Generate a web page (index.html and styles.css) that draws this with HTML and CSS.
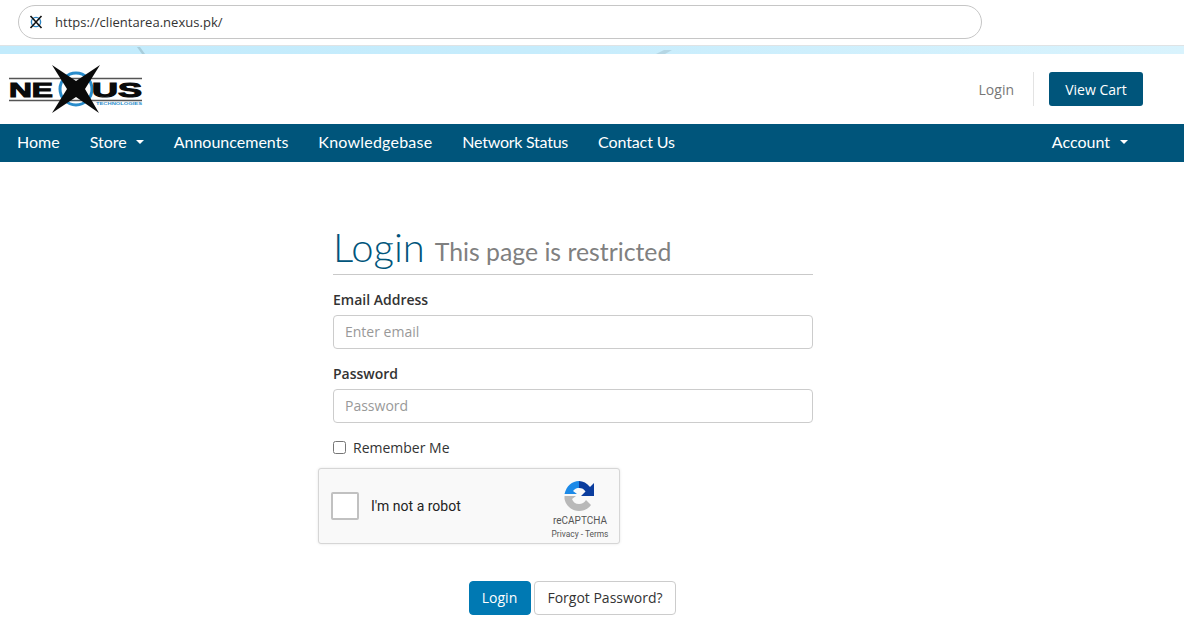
FILE: index.html
```html
<!DOCTYPE html>
<html lang="en">
<head>
<meta charset="utf-8">
<title>Login - Nexus</title>
<link rel="stylesheet" href="styles.css">
</head>
<body>
<div class="browser">
  <div class="address">
    <svg class="favicon" width="14" height="14" viewBox="0 0 14 14"><circle cx="7" cy="7" r="4.600" fill="none" stroke="#2d86c4" stroke-width="1.400"/><path d="M1.500 1 12.500 13M12.500 1 1.500 13" stroke="#111" stroke-width="1.600"/></svg>
    <span class="url">https://clientarea.nexus.pk/</span>
  </div>
</div>
<div class="band">
  <svg class="band-art" width="1184" height="8" viewBox="0 0 1184 8"><path d="M137 1l5 7h3l-5-7z" fill="#a8cddb"/><path d="M656 8l8-4 8 0-7 4z" fill="#b5d6e4"/></svg>
</div>
<header class="top">
  <svg class="logo" width="136" height="52" viewBox="0 0 136 52">
    <path d="M1 14.500H134M1 36.500H134" stroke="#555" stroke-width="1.600"/>
    <circle cx="68" cy="25" r="16" fill="none" stroke="#2a8ccb" stroke-width="3"/>
    <text class="logo-word" x="1" y="33" textLength="44" lengthAdjust="spacingAndGlyphs">NE</text>
    <text class="logo-word" x="84" y="33" textLength="50" lengthAdjust="spacingAndGlyphs">US</text>
    <path d="M44 1 68 17 92 1 77 25 91 49 68 33 44 49 59 25Z" fill="#0a0a0a"/>
    <text class="logo-tag" x="88" y="41" textLength="46" lengthAdjust="spacingAndGlyphs">TECHNOLOGIES</text>
  </svg>
  <div class="top-actions">
    <a class="top-login">Login</a>
    <span class="top-sep"></span>
    <a class="cart">View Cart</a>
  </div>
</header>
<nav class="nav">
  <div class="nav-left">
    <a>Home</a>
    <a>Store<i class="caret"></i></a>
    <a>Announcements</a>
    <a class="wide">Knowledgebase</a>
    <a class="tight">Network Status</a>
    <a class="snug">Contact Us</a>
  </div>
  <div class="nav-right"><a>Account<i class="caret caret-wide"></i></a></div>
</nav>
<main class="main">
  <form class="login">
    <h1 class="title">Login <small>This page is restricted</small></h1>
    <div class="field">
      <label class="label" for="email">Email Address</label>
      <input class="input" id="email" type="text" placeholder="Enter email">
    </div>
    <div class="field">
      <label class="label" for="pw">Password</label>
      <input class="input" id="pw" type="text" placeholder="Password">
    </div>
    <label class="remember"><input class="check" type="checkbox">Remember Me</label>
    <div class="captcha">
      <span class="captcha-box"></span>
      <span class="captcha-text">I'm not a robot</span>
      <div class="captcha-brand">
        <svg class="captcha-logo" width="32" height="32" viewBox="0 0 32 32">
          <path d="M16 1C9 1 3.500 6 1.500 14L14 14 10 11C12 8.500 14 8 16 8Z" fill="#1c8ae8"/>
          <path d="M16 1C20 1 24 3 27 7L31 3 31 16 18 16 22.500 11.500C21 9 19 8 16 8Z" fill="#0b3d9e"/>
          <path d="M1.500 16 1.500 19C3 26 9 31 16 31 21 31 25 29 28 25L23 20C21.500 22.500 19 24 16 24 12.500 24 10 22 9 19L13 16Z" fill="#b9b9b9"/>
        </svg>
        <span class="captcha-name">reCAPTCHA</span>
        <span class="captcha-links">Privacy - Terms</span>
      </div>
    </div>
    <div class="actions">
      <button class="btn btn-primary" type="button">Login</button>
      <button class="btn btn-default" type="button">Forgot Password?</button>
    </div>
  </form>
</main>
</body>
</html>
```
FILE: styles.css
```css
* { box-sizing: border-box; }
html, body { margin: 0; padding: 0; }
body {
  width: 1184px;
  height: 638px;
  overflow: hidden;
  background: #fff;
  font-family: "Open Sans", sans-serif;
  color: #333;
}
.browser {
  height: 46px;
  padding: 5px 0 0 18px;
  border-bottom: 1px solid #dfe3e5;
}
.address {
  width: 964px;
  height: 34px;
  display: flex;
  align-items: center;
  padding-left: 10px;
  border: 1px solid #c6c6c6;
  border-radius: 17px;
  background: #fff;
}
.url {
  margin-left: 12px;
  font-size: 13px;
  letter-spacing: .03px;
  color: #333;
}
.favicon { flex: none; }
.band {
  height: 8px;
  background: linear-gradient(90deg, #c2ebfc 0%, #c6ecfc 45%, #d9f3fd 100%);
}
.band-art { display: block; }
.top {
  height: 70px;
  display: flex;
  align-items: center;
  justify-content: space-between;
  padding: 0 41px 0 8px;
}
.logo { display: block; margin-top: 2px; }
.logo-word {
  font-family: "Liberation Sans", sans-serif;
  font-weight: 700;
  font-size: 21px;
  fill: #0a0a0a;
  stroke: #0a0a0a;
  stroke-width: 1.100px;
}
.logo-tag {
  font-family: "Liberation Sans", sans-serif;
  font-weight: 700;
  font-size: 4px;
  fill: #2a8ccb;
}
.top-actions { display: flex; align-items: center; }
.top-login { font-size: 14px; color: #777; }
.top-sep {
  width: 1px;
  height: 34px;
  margin: 0 15px 0 19px;
  background: #e3e3e3;
}
.cart {
  width: 94px;
  height: 34px;
  display: flex;
  align-items: center;
  justify-content: center;
  background: #00557b;
  border-radius: 3px;
  color: #fff;
  font-size: 14px;
  font-weight: 500;
}
.nav {
  height: 38px;
  display: flex;
  align-items: center;
  justify-content: space-between;
  padding: 0 56px 4px 17px;
  background: #00557b;
  color: #fff;
  font-family: "Lato", sans-serif;
  font-size: 16px;
}
.nav-left { display: flex; gap: 30px; }
.nav a { display: flex; align-items: center; }
.nav .wide { letter-spacing: .22px; }
.nav .tight { letter-spacing: -.25px; }
.nav .snug { letter-spacing: -.1px; }
.caret {
  width: 0;
  height: 0;
  margin-left: 9px;
  margin-top: 2px;
  border-left: 4px solid transparent;
  border-right: 4px solid transparent;
  border-top: 4px solid #fff;
}
.caret-wide { margin-left: 10px; }
.main { padding: 62px 0 0 333px; }
.login { width: 480px; display: block; }
.title {
  margin: 0 0 15px;
  height: 51px;
  border-bottom: 1px solid #c9c9c9;
  font-family: "Lato", sans-serif;
  font-weight: 300;
  font-size: 40px;
  line-height: 46px;
  color: #00557b;
}
.title small {
  margin-left: -1px;
  vertical-align: 1px;
  font-family: "Lato", sans-serif;
  font-size: 24.800px;
  font-weight: 400;
  color: #808080;
}
.field { margin-bottom: 15px; }
.label {
  display: block;
  height: 20px;
  margin-bottom: 5px;
  font-size: 14px;
  font-weight: 600;
  line-height: 20px;
  color: #333;
}
.input {
  display: block;
  width: 100%;
  height: 34px;
  padding: 0 11px 2px;
  border: 1px solid #ccc;
  border-radius: 4px;
  background: #fff;
  font-family: "Open Sans", sans-serif;
  font-size: 14px;
}
.input::placeholder { color: #999; opacity: 1; }
.remember {
  display: flex;
  align-items: center;
  height: 20px;
  margin-top: -1px;
  font-size: 14px;
  color: #333;
}
.check { width: 13px; height: 13px; margin: 0 7px 0 0; }
.captcha {
  width: 302px;
  height: 76px;
  margin: 11px 0 0 -15px;
  display: flex;
  align-items: center;
  padding: 0 12px;
  background: #f9f9f9;
  border: 1px solid #d6d6d6;
  border-radius: 3px;
  box-shadow: 0 0 3px rgba(0, 0, 0, .1);
  font-family: "Roboto", sans-serif;
}
.captcha-box {
  width: 28px;
  height: 28px;
  background: #fff;
  border: 2px solid #c1c1c1;
  border-radius: 2px;
}
.captcha-text { margin-left: 12px; font-size: 14px; color: #222; }
.captcha-brand {
  margin-left: auto;
  margin-right: -2px;
  width: 58px;
  display: flex;
  flex-direction: column;
  align-items: center;
  padding-top: 7px;
}
.captcha-logo { margin-right: 2px; }
.captcha-name { margin-top: 3px; font-size: 10px; line-height: 12px; color: #555; }
.captcha-links { margin-top: 1px; font-size: 8.400px; line-height: 12px; color: #555; white-space: nowrap; }
.actions {
  display: flex;
  justify-content: center;
  gap: 3px;
  padding-right: 2px;
  margin-top: 37px;
}
.btn {
  height: 34px;
  padding: 0 0 2px;
  border-radius: 4px;
  font-family: "Open Sans", sans-serif;
  font-size: 14px;
  white-space: nowrap;
}
.btn-primary { background: #0079b3; border: 1px solid #0079b3; color: #fff; width: 62px; }
.btn-default { background: #fff; border: 1px solid #ccc; color: #333; width: 142px; padding-left: 1px; }
```
